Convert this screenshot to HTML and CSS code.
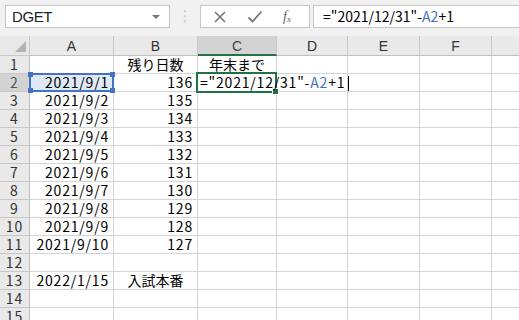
FILE: index.html
```html
<!DOCTYPE html>
<html lang="ja">
<head>
  <meta charset="UTF-8" />
  <title>Book1 - Excel</title>
  <link rel="stylesheet" href="styles.css">
</head>
<body>

  <div class="toolbar">
    <div class="namebox">
      <span>DGET</span>
      <span class="drop"></span>
    </div>
    <div class="grip">⋮</div>
    <div class="fbuttons">
      <svg class="ico" width="14" height="14" viewBox="0 0 14 14"><path d="M2 2 L12 12 M12 2 L2 12" stroke="#777" stroke-width="1.6" fill="none"/></svg>
      <svg class="ico" width="16" height="14" viewBox="0 0 16 14"><path d="M1.5 7.5 L5.5 11.5 L14.5 1.5" stroke="#777" stroke-width="1.8" fill="none"/></svg>
      <span class="fx">f<sub>x</sub></span>
    </div>
    <div class="formula">="2021/12/31"-<span class="ref">A2</span>+1</div>
  </div>

  <div class="sheet">
    <div class="corner"><span class="tri"></span></div>
    <div class="ch">A</div>
    <div class="ch">B</div>
    <div class="ch sel">C</div>
    <div class="ch">D</div>
    <div class="ch">E</div>
    <div class="ch">F</div>
    <div class="ch"></div>

    <div class="rh">1</div>
    <div class="c"></div><div class="c m">残り日数</div><div class="c m">年末まで</div><div class="c"></div><div class="c"></div><div class="c"></div><div class="c"></div>

    <div class="rh sel">2</div>
    <div class="c r refcell">2021/9/1<span class="refbox"><i class="h tl"></i><i class="h tr"></i><i class="h bl"></i><i class="h br"></i></span></div>
    <div class="c r">136</div>
    <div class="c editing"><span class="edit">="2021/12/31"-<span class="ref">A2</span>+1<span class="caret"></span></span><span class="activebox"></span></div>
    <div class="c"></div><div class="c"></div><div class="c"></div><div class="c"></div>

    <div class="rh">3</div>
    <div class="c r">2021/9/2</div><div class="c r">135</div><div class="c"></div><div class="c"></div><div class="c"></div><div class="c"></div><div class="c"></div>
    <div class="rh">4</div>
    <div class="c r">2021/9/3</div><div class="c r">134</div><div class="c"></div><div class="c"></div><div class="c"></div><div class="c"></div><div class="c"></div>
    <div class="rh">5</div>
    <div class="c r">2021/9/4</div><div class="c r">133</div><div class="c"></div><div class="c"></div><div class="c"></div><div class="c"></div><div class="c"></div>
    <div class="rh">6</div>
    <div class="c r">2021/9/5</div><div class="c r">132</div><div class="c"></div><div class="c"></div><div class="c"></div><div class="c"></div><div class="c"></div>
    <div class="rh">7</div>
    <div class="c r">2021/9/6</div><div class="c r">131</div><div class="c"></div><div class="c"></div><div class="c"></div><div class="c"></div><div class="c"></div>
    <div class="rh">8</div>
    <div class="c r">2021/9/7</div><div class="c r">130</div><div class="c"></div><div class="c"></div><div class="c"></div><div class="c"></div><div class="c"></div>
    <div class="rh">9</div>
    <div class="c r">2021/9/8</div><div class="c r">129</div><div class="c"></div><div class="c"></div><div class="c"></div><div class="c"></div><div class="c"></div>
    <div class="rh">10</div>
    <div class="c r">2021/9/9</div><div class="c r">128</div><div class="c"></div><div class="c"></div><div class="c"></div><div class="c"></div><div class="c"></div>
    <div class="rh">11</div>
    <div class="c r">2021/9/10</div><div class="c r">127</div><div class="c"></div><div class="c"></div><div class="c"></div><div class="c"></div><div class="c"></div>
    <div class="rh">12</div>
    <div class="c"></div><div class="c"></div><div class="c"></div><div class="c"></div><div class="c"></div><div class="c"></div><div class="c"></div>
    <div class="rh">13</div>
    <div class="c r">2022/1/15</div><div class="c m">入試本番</div><div class="c"></div><div class="c"></div><div class="c"></div><div class="c"></div><div class="c"></div>
    <div class="rh">14</div>
    <div class="c"></div><div class="c"></div><div class="c"></div><div class="c"></div><div class="c"></div><div class="c"></div><div class="c"></div>
    <div class="rh">15</div>
    <div class="c"></div><div class="c"></div><div class="c"></div><div class="c"></div><div class="c"></div><div class="c"></div><div class="c"></div>
  </div>

</body>
</html>
```

FILE: styles.css
```css
* {
  box-sizing: border-box;
}

html, body {
  margin: 0;
  height: 320px;
  overflow: hidden;
  background: #fff;
}

body {
  font-family: "Noto Sans CJK JP", sans-serif;
  font-size: 14px;
  color: #000;
}

/* barra de formulas */
.toolbar {
  height: 36px;
  background: #f1f1f1;
  display: flex;
  align-items: flex-start;
  padding-top: 5px;
  padding-left: 5px;
}

.namebox {
  width: 165px;
  height: 23px;
  background: #fff;
  border: 1px solid #c6c6c6;
  display: flex;
  align-items: center;
  justify-content: space-between;
  padding: 0 6px 0 6px;
  font-family: "Liberation Sans", sans-serif;
  font-size: 15px;
  color: #222;
  letter-spacing: -0.4px;
}

.drop {
  width: 0;
  height: 0;
  border-left: 4px solid transparent;
  border-right: 4px solid transparent;
  border-top: 4px solid #777;
  margin-right: 3px;
}

.grip {
  width: 30px;
  text-align: center;
  color: #c0c0c0;
  font-size: 15px;
  line-height: 23px;
  font-family: "DejaVu Sans", sans-serif;
}

.fbuttons {
  width: 110px;
  height: 23px;
  background: #fff;
  border: 1px solid #c6c6c6;
  display: flex;
  align-items: center;
  gap: 20px;
  padding-left: 12px;
}

.fx {
  font-family: "Liberation Serif", serif;
  font-style: italic;
  font-size: 14px;
  color: #666;
  line-height: 1;
}

.fx sub {
  font-size: 9px;
  vertical-align: -1px;
}

.formula {
  flex: 1;
  height: 23px;
  margin-left: 3px;
  background: #fff;
  border: 1px solid #c6c6c6;
  border-right: none;
  padding-left: 9px;
  line-height: 21px;
  white-space: nowrap;
}

.ref {
  color: #4472c4;
}

/* hoja */
.sheet {
  display: grid;
  grid-template-columns: 30px 84px 84px 79px 71px 72px 72px 28px;
  grid-template-rows: 20px repeat(15, 18px);
}

.corner {
  background: #e9e9e9;
  border-right: 1px solid #c8c8c8;
  border-bottom: 1px solid #c8c8c8;
  display: flex;
  align-items: flex-end;
  justify-content: flex-end;
  padding: 0 3px 3px 0;
}

.tri {
  width: 0;
  height: 0;
  border-left: 11px solid transparent;
  border-bottom: 11px solid #b4b4b4;
}

.ch {
  background: #e9e9e9;
  border-right: 1px solid #c8c8c8;
  border-bottom: 1px solid #bfbfbf;
  text-align: center;
  font-family: "Liberation Sans", sans-serif;
  font-size: 14px;
  line-height: 20px;
  color: #333;
}

.ch.sel {
  background: #d3d3d3;
  border-bottom: 2px solid #217346;
  color: #444;
}

.rh {
  background: #e9e9e9;
  border-right: 1px solid #bfbfbf;
  border-bottom: 1px solid #c8c8c8;
  text-align: center;
  font-size: 14px;
  line-height: 17px;
  letter-spacing: 1px;
  color: #333;
}

.rh.sel {
  background: #d3d3d3;
  color: #555;
}

.c {
  border-right: 1px solid #d4d4d4;
  border-bottom: 1px solid #d4d4d4;
  line-height: 17px;
  padding: 0 4px;
  white-space: nowrap;
  letter-spacing: 0.8px;
}

.c.r {
  text-align: right;
}

.c.m {
  text-align: center;
  padding: 0;
  letter-spacing: 0;
}

/* referencia A2 resaltada */
.refcell {
  position: relative;
  background: #dfe8f5;
}

.refbox {
  position: absolute;
  left: -1px;
  top: -1px;
  right: -1px;
  bottom: -1px;
  border: 2px solid #4472c4;
}

.refbox .h {
  position: absolute;
  width: 5px;
  height: 5px;
  background: #4472c4;
}

.refbox .tl { left: -3px; top: -3px; }
.refbox .tr { right: -3px; top: -3px; }
.refbox .bl { left: -3px; bottom: -3px; }
.refbox .br { right: -3px; bottom: -3px; }

/* celda activa en edicion */
.editing {
  position: relative;
  overflow: visible;
  padding-left: 2px;
}

.edit {
  position: relative;
  z-index: 2;
}

.caret {
  display: inline-block;
  width: 1px;
  height: 15px;
  background: #000;
  vertical-align: -3px;
  margin-left: 3px;
}

.activebox {
  position: absolute;
  left: -2px;
  top: -2px;
  width: 81px;
  height: 21px;
  border: 2px solid #217346;
  z-index: 1;
}

.activebox::after {
  content: "";
  position: absolute;
  right: -4px;
  bottom: -4px;
  width: 5px;
  height: 5px;
  background: #217346;
  border: 1px solid #fff;
}
```
